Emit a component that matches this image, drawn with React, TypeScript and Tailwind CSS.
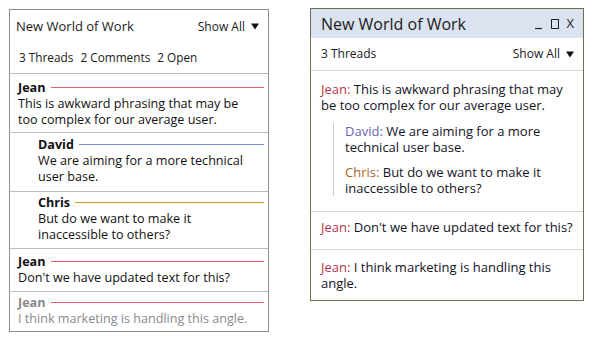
const font = { fontFamily: '"Open Sans", "Noto Sans", sans-serif' };

type Comment = {
  name: string;
  lines: string[];
  color: string;
  pad: string;
  indent?: boolean;
  muted?: boolean;
};

const comments: Comment[] = [
  { name: "Jean", lines: ["This is awkward phrasing that may be", "too complex for our average user."], color: "bg-[#e0646c]", pad: "pt-[6px] pb-[4px]" },
  { name: "David", lines: ["We are aiming for a more technical", "user base."], color: "bg-[#7f8dd2]", pad: "pt-[4px] pb-[6px]", indent: true },
  { name: "Chris", lines: ["But do we want to make it", "inaccessible to others?"], color: "bg-[#c99a1c]", pad: "pt-[3px] pb-[5px]", indent: true },
  { name: "Jean", lines: ["Don't we have updated text for this?"], color: "bg-[#ea5f6a]", pad: "pt-[5px] pb-[5px]" },
  { name: "Jean", lines: ["I think marketing is handling this angle."], color: "bg-[#ea5f6a]", pad: "pt-[3px] pb-[4px]", muted: true },
];

function Caret() {
  return (
    <svg width="8" height="7" viewBox="0 0 8 7" className="ml-[6px]">
      <path d="M0 0.5 H8 L4 6.5 Z" fill="#111" />
    </svg>
  );
}

function LeftPanel() {
  return (
    <div className="w-[260px] h-[323px] border border-[#8f8f8f] bg-white flex flex-col">
      <div className="h-[33px] flex items-center justify-between pl-[6px] pr-[9px] text-[13px] text-[#1a1a1a]">
        <span>New World of Work</span>
        <span className="flex items-center text-[12px]">Show All<Caret /></span>
      </div>
      <div className="h-[31px] flex items-center gap-[7px] pl-[9px] text-[11.8px] text-[#1a1a1a] border-b border-[#bdbdbd]">
        <span>3 Threads</span>
        <span>2 Comments</span>
        <span>2 Open</span>
      </div>
      {comments.map((c, i) => (
        <div
          key={i}
          className={`${c.pad} pr-[4px] text-[12.6px] leading-[16px] ${c.indent ? "pl-[28px]" : "pl-[8px]"} ${i < comments.length - 1 ? "border-b border-[#bdbdbd]" : ""} ${c.muted ? "text-[#8a8a8a]" : "text-[#111]"}`}
        >
          <div className="flex items-start gap-[5px]">
            <span className="font-bold">{c.name}</span>
            <span className={`flex-1 h-[1px] mt-[7px] ${c.color}`} />
          </div>
          {c.lines.map((l, j) => (
            <div key={j} className="whitespace-nowrap">{l}</div>
          ))}
        </div>
      ))}
    </div>
  );
}

function Reply({ name, color, lines }: { name: string; color: string; lines: string[] }) {
  return (
    <div className="text-[13px] leading-[16px] text-[#14141f]">
      {lines.map((l, j) => (
        <div key={j} className="whitespace-nowrap">
          {j === 0 && <span className={color}>{name}: </span>}
          {l}
        </div>
      ))}
    </div>
  );
}

function RightPanel() {
  return (
    <div className="w-[274px] h-[293px] border border-[#6e6e52] bg-white flex flex-col">
      <div className="h-[29px] bg-[#dce3f0] flex items-center justify-between pl-[10px] pr-[9px]">
        <span className="text-[16px] text-[#1a1a1a]">New World of Work</span>
        <div className="flex items-center gap-[6px] text-[#222]">
          <svg width="10" height="12" viewBox="0 0 10 12">
            <path d="M1 10.5 H8" stroke="#222" strokeWidth="1.2" />
          </svg>
          <svg width="10" height="12" viewBox="0 0 10 12">
            <rect x="1.5" y="1.5" width="7" height="9" fill="none" stroke="#222" strokeWidth="1" />
          </svg>
          <span className="text-[13px] leading-none">X</span>
        </div>
      </div>
      <div className="h-[33px] flex items-center justify-between pl-[10px] pr-[9px] text-[12px] text-[#1a1a1a] border-b border-[#d6d6de]">
        <span>3 Threads</span>
        <span className="flex items-center">Show All<Caret /></span>
      </div>
      <div className="pl-[10px] pt-[10px] pb-[15px] border-b border-[#d6d6de]">
        <Reply name="Jean" color="text-[#b23a4c]" lines={["This is awkward phrasing that may", "be too complex for our average user."]} />
        <div className="ml-[12px] mt-[10px] pl-[11px] border-l border-[#c9c9d9] flex flex-col gap-[9px]">
          <Reply name="David" color="text-[#6a62b4]" lines={[" We are aiming for a more", "technical user base."]} />
          <Reply name="Chris" color="text-[#a8681e]" lines={["But do we want to make it", "inaccessible to others?"]} />
        </div>
      </div>
      <div className="pl-[10px] pt-[7px] pb-[14px] border-b border-[#d6d6de]">
        <Reply name="Jean" color="text-[#b23a4c]" lines={[" Don't we have updated text for this?"]} />
      </div>
      <div className="pl-[10px] pt-[9px]">
        <Reply name="Jean" color="text-[#b23a4c]" lines={[" I think marketing is handling this", "angle."]} />
      </div>
    </div>
  );
}

export default function App() {
  return (
    <div className="w-[594px] h-[342px] bg-white flex items-start pt-[8px] pl-[9px] gap-[41px]" style={font}>
      <div className="mt-[1px]">
        <LeftPanel />
      </div>
      <RightPanel />
    </div>
  );
}
